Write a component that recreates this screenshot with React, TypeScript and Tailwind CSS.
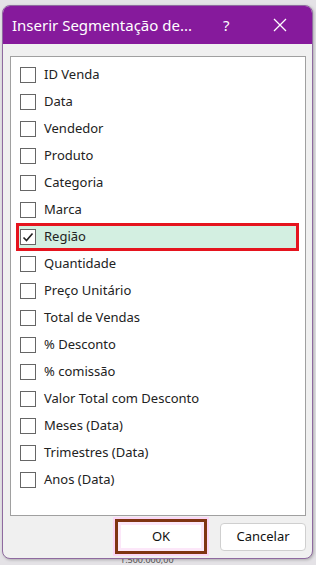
import React from "react";

const items = [
  "ID Venda",
  "Data",
  "Vendedor",
  "Produto",
  "Categoria",
  "Marca",
  "Região",
  "Quantidade",
  "Preço Unitário",
  "Total de Vendas",
  "% Desconto",
  "% comissão",
  "Valor Total com Desconto",
  "Meses (Data)",
  "Trimestres (Data)",
  "Anos (Data)",
];

export default function App() {
  return (
    <div
      className="relative w-[316px] h-[565px] bg-[#e4e2e6] overflow-hidden"
      style={{ fontFamily: '"Noto Sans", "Open Sans", sans-serif' }}
    >
      <div className="absolute left-[120px] top-[555px] text-[9px] text-[#555] leading-none">1.500.000,00</div>
      <div className="absolute left-[2px] top-[5px] w-[311px] h-[554px] rounded-[8px] border border-[#8f6aa0] bg-[#f0f0f0] flex flex-col overflow-hidden shadow-[1px_1px_3px_rgba(0,0,0,0.25)]">
        <div className="h-[38px] bg-[#861a9c] flex items-center text-white shrink-0">
          <div className="pl-[9px] text-[15px] w-[210px]">Inserir Segmentação de...</div>
          <div className="text-[15px] w-[56px] pl-[10px]">?</div>
          <svg width="14" height="14" viewBox="0 0 14 14" className="ml-[4px]">
            <path d="M1 1 L13 13 M13 1 L1 13" stroke="white" strokeWidth="1.3" />
          </svg>
        </div>
        <div className="mt-[12px] ml-[7px] w-[296px] h-[460px] bg-white border border-[#a0a0a0] pt-[4px] flex flex-col">
          {items.map((it) => {
            const sel = it === "Região";
            return (
              <div key={it} className="h-[27px] flex items-center">
                <div
                  className={
                    sel
                      ? "ml-[5px] w-[283px] h-[28px] flex items-center border-[3px] border-[#e5141e] bg-[#d3efe1]"
                      : "ml-[5px] w-[283px] h-[27px] flex items-center border-[3px] border-transparent"
                  }
                >
                  <div className="ml-[1px] w-[16px] h-[16px] border border-[#666] bg-white flex items-center justify-center">
                    {sel && (
                      <svg width="12" height="12" viewBox="0 0 12 12">
                        <path d="M1.5 6.5 L4.5 9.5 L10.5 2.5" stroke="#222" strokeWidth="1.6" fill="none" />
                      </svg>
                    )}
                  </div>
                  <span className="ml-[8px] text-[13px] text-[#222]">{it}</span>
                </div>
              </div>
            );
          })}
        </div>
        <div className="flex items-center mt-[1px]">
          <div className="ml-[110px] w-[96px] h-[39px] bg-[#fbd6f5] p-[2px]">
            <div className="w-full h-full border-[3px] border-[#7f3412] bg-[#fce7f9] p-[3px]">
              <div className="w-full h-full bg-white flex items-center justify-center text-[13px] text-[#111]">OK</div>
            </div>
          </div>
          <div className="ml-[11px] w-[86px] h-[28px] bg-white border border-[#cfcfcf] rounded-[4px] flex items-center justify-center text-[13px] text-[#111]">
            Cancelar
          </div>
        </div>
      </div>
    </div>
  );
}
